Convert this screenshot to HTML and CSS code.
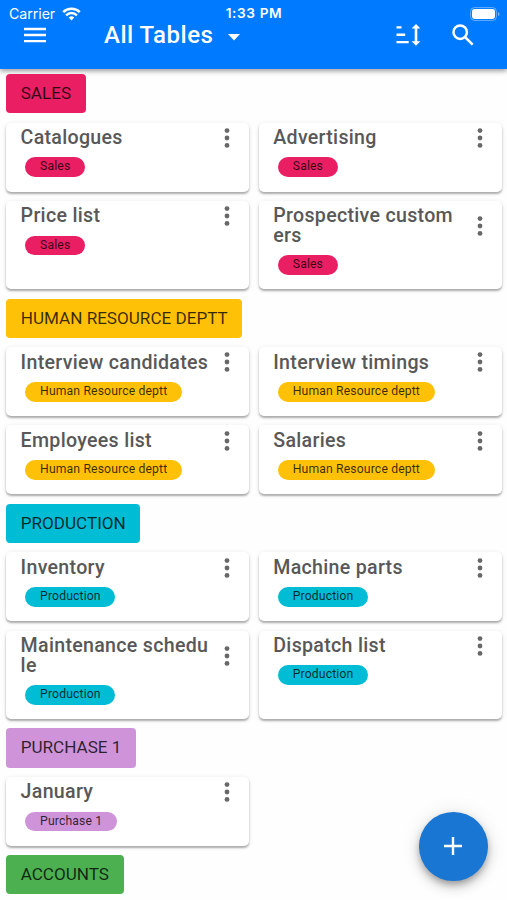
FILE: index.html
```html
<!DOCTYPE html>
<html lang="en">
<head>
<meta charset="utf-8">
<title>All Tables</title>
<link rel="stylesheet" href="styles.css">
</head>
<body>
<svg class="defs" width="0" height="0"><symbol id="more" viewBox="0 0 6 20"><circle cx="3" cy="2.6" r="2.4"/><circle cx="3" cy="10" r="2.4"/><circle cx="3" cy="17.4" r="2.4"/></symbol></svg>
<div class="screen">
<header class="header">
  <div class="status">
    <div class="carrier"><span>Carrier</span>
      <svg width="19" height="14" viewBox="0 0 19 14" fill="none" stroke="#fff" stroke-width="2.4"><path d="M1.2 5.1a11.8 11.8 0 0 1 16.6 0M4.1 8.3a7.6 7.6 0 0 1 10.8 0"/><path d="M6.7 10.5a4 4 0 0 1 5.6 0L9.5 13.5z" fill="#fff" stroke="none"/></svg>
    </div>
    <span class="time">1:33 PM</span>
    <svg class="battery" width="31" height="14" viewBox="0 0 31 14"><rect x=".6" y=".6" width="25.8" height="12.8" rx="3.8" fill="none" stroke="#fff" stroke-opacity=".4"/><rect x="2" y="2" width="23" height="10" rx="2.4" fill="#fff"/><path d="M28 5v4q1.6-.6 1.6-2T28 5z" fill="#fff" fill-opacity=".45"/></svg>
  </div>
  <div class="toolbar">
    <svg class="menu" width="22" height="16" viewBox="0 0 22 16" fill="#fff"><path d="M0 .8h22v2.4H0zM0 6.8h22v2.4H0zM0 12.9h22v2.4H0z"/></svg>
    <h1>All Tables</h1>
    <svg class="caret" width="12" height="7" viewBox="0 0 12 7" fill="#fff"><path d="M0 0h12L6 6.5z"/></svg>
    <svg class="sort" width="25" height="22" viewBox="0 0 25 22" fill="#fff"><path d="M.5 2.2h5v2.4h-5zM.5 9.5h8.7v2.4H.5zM.5 16.9h12.2v2.4H.5zM20 0l4.4 4.6h-3.1v12.6h3.1L20 21.8l-4.4-4.6h3.1V4.6h-3.1z"/></svg>
    <svg class="search" width="22" height="22" viewBox="0 0 22 22" fill="none" stroke="#fff" stroke-width="2.5"><circle cx="8.2" cy="8.2" r="6.7"/><path d="M13 13l7.6 7.6"/></svg>
  </div>
</header>
<main class="content">
  <h2 class="chip sales">SALES</h2>
  <div class="grid">
    <article class="card"><div class="head"><h3>Catalogues</h3><svg class="more"><use href="#more"/></svg></div><span class="tag sales">Sales</span></article>
    <article class="card"><div class="head"><h3>Advertising</h3><svg class="more"><use href="#more"/></svg></div><span class="tag sales">Sales</span></article>
    <article class="card"><div class="head"><h3>Price list</h3><svg class="more"><use href="#more"/></svg></div><span class="tag sales">Sales</span></article>
    <article class="card"><div class="head"><h3>Prospective customers</h3><svg class="more"><use href="#more"/></svg></div><span class="tag sales">Sales</span></article>
  </div>
  <h2 class="chip hr">HUMAN RESOURCE DEPTT</h2>
  <div class="grid">
    <article class="card"><div class="head"><h3>Interview candidates</h3><svg class="more"><use href="#more"/></svg></div><span class="tag hr">Human Resource deptt</span></article>
    <article class="card"><div class="head"><h3>Interview timings</h3><svg class="more"><use href="#more"/></svg></div><span class="tag hr">Human Resource deptt</span></article>
    <article class="card"><div class="head"><h3>Employees list</h3><svg class="more"><use href="#more"/></svg></div><span class="tag hr">Human Resource deptt</span></article>
    <article class="card"><div class="head"><h3>Salaries</h3><svg class="more"><use href="#more"/></svg></div><span class="tag hr">Human Resource deptt</span></article>
  </div>
  <h2 class="chip production">PRODUCTION</h2>
  <div class="grid">
    <article class="card"><div class="head"><h3>Inventory</h3><svg class="more"><use href="#more"/></svg></div><span class="tag production">Production</span></article>
    <article class="card"><div class="head"><h3>Machine parts</h3><svg class="more"><use href="#more"/></svg></div><span class="tag production">Production</span></article>
    <article class="card"><div class="head"><h3>Maintenance schedule</h3><svg class="more"><use href="#more"/></svg></div><span class="tag production">Production</span></article>
    <article class="card"><div class="head"><h3>Dispatch list</h3><svg class="more"><use href="#more"/></svg></div><span class="tag production">Production</span></article>
  </div>
  <h2 class="chip purchase">PURCHASE 1</h2>
  <div class="grid">
    <article class="card"><div class="head"><h3>January</h3><svg class="more"><use href="#more"/></svg></div><span class="tag purchase">Purchase 1</span></article>
  </div>
  <h2 class="chip accounts">ACCOUNTS</h2>
</main>
<button class="fab" aria-label="Add"><svg width="18" height="18" viewBox="0 0 18 18" fill="#fff"><path d="M7.8 0h2.4v7.8H18v2.4h-7.8V18H7.8v-7.8H0V7.8h7.8z"/></svg></button>
</div>
</body>
</html>
```
FILE: styles.css
```css
* { box-sizing: border-box; }
body { margin: 0; background: #fefefe; font-family: Roboto, "Liberation Sans", sans-serif; }
.defs { position: absolute; }
.screen { position: relative; height: 900px; overflow: hidden; }
svg { display: block; flex: none; }
h1, h2, h3 { margin: 0; }

.header { height: 69px; background: #007aff; color: #fff; box-shadow: 0 2px 5px rgba(0,0,0,.4); }
.status { display: grid; grid-template-columns: 1fr auto 1fr; align-items: center; height: 22px; padding: 5px 8px 0 9px; font: 14.2px/17px Inter, sans-serif; }
.carrier { display: flex; align-items: center; gap: 6px; }
.carrier span { width: 47px; letter-spacing: -.05px; }
.time { font-size: 13.7px; font-weight: 600; letter-spacing: .6px; }
.battery { justify-self: end; margin-right: -2px; }
.toolbar { display: flex; align-items: center; height: 26px; padding-left: 24px; }
h1 { width: 110px; margin-left: 58px; font-size: 24px; line-height: 26px; font-weight: 500; letter-spacing: .5px; white-space: nowrap; }
.caret { margin: 4px 0 0 14px; }
.sort { margin-left: 156px; }
.search { margin-left: 31px; }

.content { display: flex; flex-direction: column; align-items: flex-start; gap: 9.35px; padding: 5px 5px 0 6px; }
.chip { height: 39.2px; padding: 0 14.7px; border-radius: 4px; font-size: 17.1px; line-height: 38.2px; font-weight: 400; color: rgba(0,0,0,.78); white-space: nowrap; }
.grid { display: grid; grid-template-columns: 1fr 1fr; gap: 9.35px; width: 100%; }
.card { min-height: 69px; padding: 5.4px 14.6px 14.4px; border-radius: 5px; background: #fff; box-shadow: 0 2px 2px rgba(0,0,0,.28), 0 1px 5px rgba(0,0,0,.1); }
.head { display: flex; align-items: center; justify-content: space-between; }
h3 { width: 188.5px; font-size: 19.6px; line-height: 19.6px; font-weight: 500; letter-spacing: .3px; color: #585858; word-break: break-all; }
.more { width: 6px; height: 20px; margin: -.2px 4.4px -.2px 0; fill: #686868; }
.tag { display: block; width: fit-content; height: 19.6px; margin: 9.8px 0 0 4.9px; padding: 0 14.6px; border-radius: 10px; font-size: 12.2px; line-height: 19.6px; letter-spacing: .14px; color: rgba(0,0,0,.78); white-space: nowrap; }
.sales { background: #e91e63; }
.hr { background: #ffc107; }
.production { background: #00bcd4; }
.purchase { background: #ce93d8; }
.accounts { background: #4caf50; }

.fab { position: absolute; left: 419px; top: 812px; width: 68.6px; height: 68.6px; padding: 0 1px 1px 0; border: 0; border-radius: 50%; display: grid; place-items: center; background: #1976d2; box-shadow: 0 4px 6px -1px rgba(0,0,0,.25), 0 6px 12px rgba(0,0,0,.16), 0 1px 20px rgba(0,0,0,.1); }
```
